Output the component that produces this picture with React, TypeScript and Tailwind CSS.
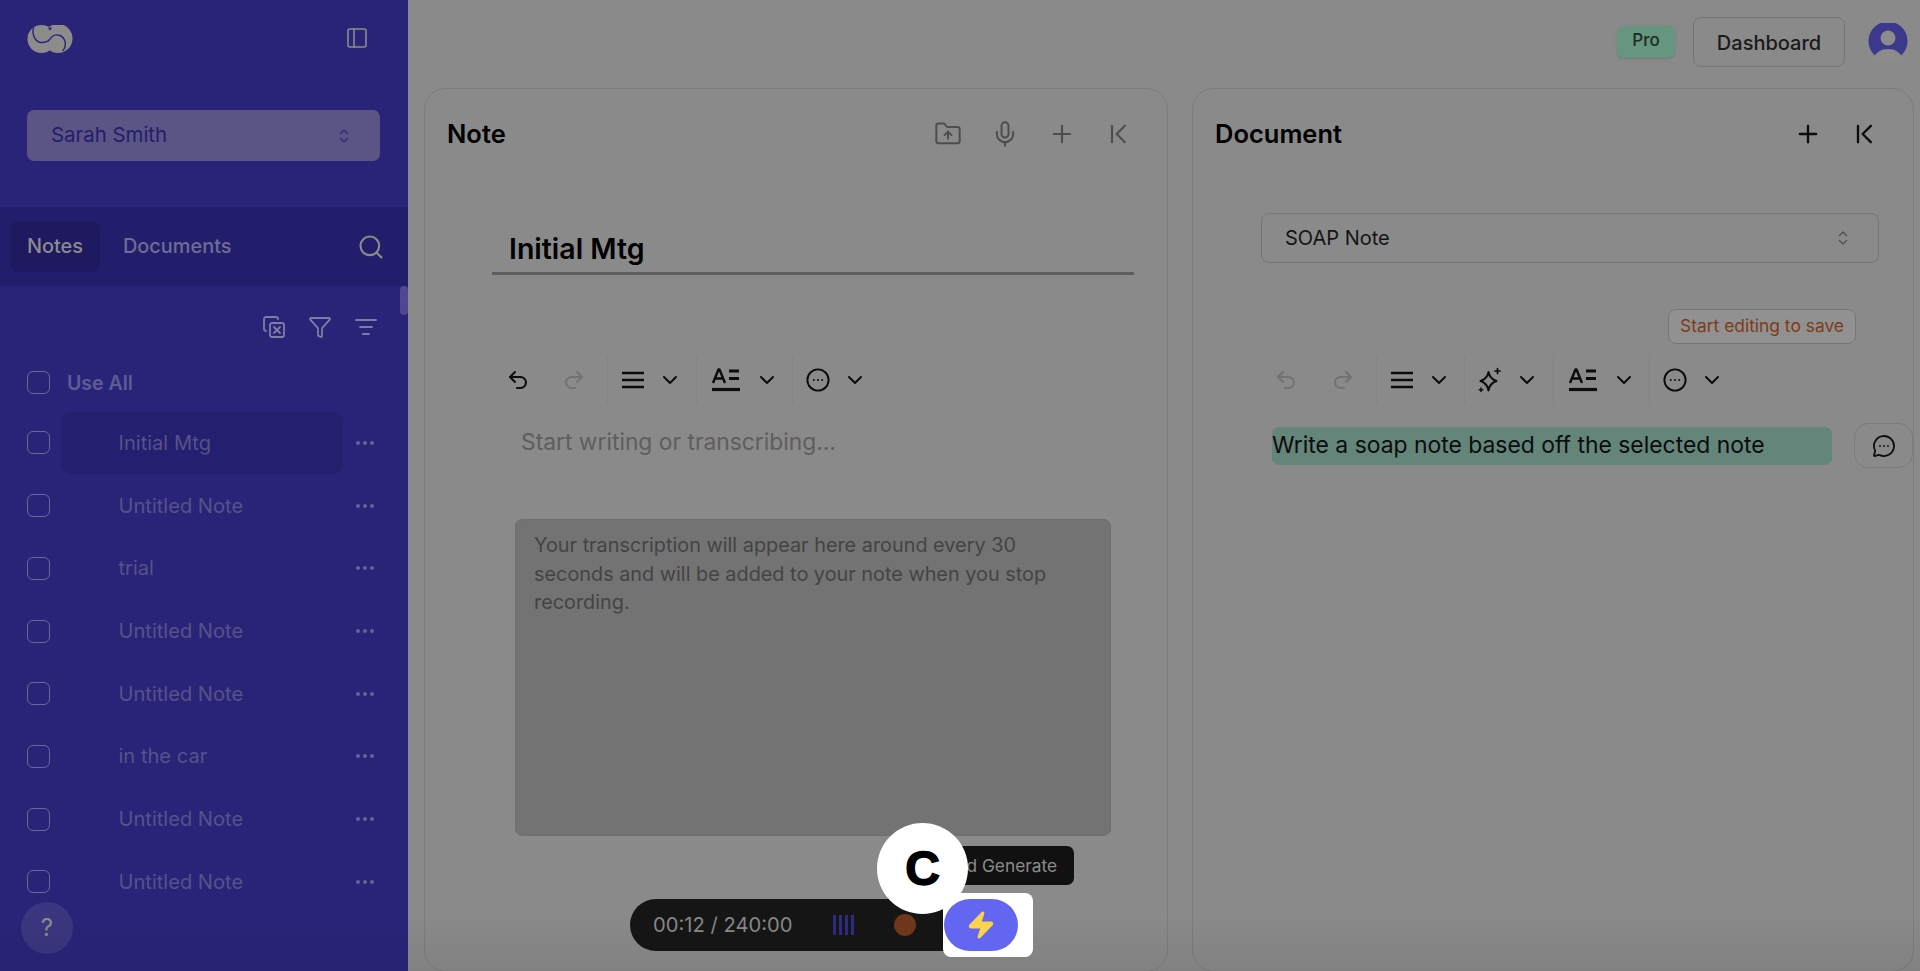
import React from "react";
import {
  PanelLeft, Search, CopyX, Funnel, ListFilter, Ellipsis, FolderUp, Mic, Plus, Undo2, Redo2,
  ChevronDown, MessageCircleMore, Zap,
} from "lucide-react";

function UpDown({ c = "#7b78a8" }: { c?: string }) {
  return (
    <svg width="12" height="16" viewBox="0 0 12 16" fill="none" stroke={c} strokeWidth="1.2" strokeLinecap="round" strokeLinejoin="round">
      <path d="M2.5 5.5 6 2l3.5 3.5M2.5 10.5 6 14l3.5-3.5" />
    </svg>
  );
}

function Collapse({ c, size = 24, w = 2 }: { c: string; size?: number; w?: number }) {
  return (
    <svg width={size} height={size} viewBox="0 0 24 24" fill="none" stroke={c} strokeWidth={w} strokeLinecap="round" strokeLinejoin="round">
      <path d="M6 5v14M17 5l-7 7 7 7" />
    </svg>
  );
}

function TextStyle() {
  return (
    <svg width="30" height="26" viewBox="0 0 30 26" fill="none" stroke="#0c0c0c" strokeLinejoin="round">
      <path d="M2 16 7.5 2.5h1L14 16M4 11.5h8" strokeWidth="2.4" />
      <path d="M18 4h10M18 11.5h10" strokeWidth="2.8" />
      <path d="M1 22.5h28" strokeWidth="3.2" />
    </svg>
  );
}

function MoreCircle() {
  return (
    <svg width="26" height="26" viewBox="0 0 26 26" fill="none" stroke="#0c0c0c">
      <circle cx="13" cy="13" r="10.6" strokeWidth="1.9" />
      <circle cx="8.8" cy="13" r=".6" fill="#0c0c0c" strokeWidth="1" />
      <circle cx="13" cy="13" r=".6" fill="#0c0c0c" strokeWidth="1" />
      <circle cx="17.2" cy="13" r=".6" fill="#0c0c0c" strokeWidth="1" />
    </svg>
  );
}

function Lines() {
  return (
    <svg width="24" height="20" viewBox="0 0 24 20" fill="none" stroke="#0c0c0c" strokeWidth="2.3">
      <path d="M1 3h22M1 10h22M1 17h22" />
    </svg>
  );
}

function Spark() {
  return (
    <svg width="28" height="28" viewBox="0 0 28 28" fill="none" stroke="#0c0c0c" strokeWidth="2" strokeLinejoin="round" strokeLinecap="round">
      <path d="M12.5 6c1 5 3.2 7.5 8 9-4.8 1.5-7 4-8 9.500-1-5.500-3.200-8-8-9.500 4.800-1.500 7-4 8-9z" />
      <path d="M21.500 2.500v5M19 5h5" strokeWidth="1.700" />
      <path d="M5 22v3.500M3.300 23.800h3.400" strokeWidth="1.500" />
    </svg>
  );
}

function Sep() {
  return <div className="h-[48px] w-px shrink-0 bg-[#838383]" />;
}

function Chev() {
  return (
    <div className="flex w-[24px] shrink-0 justify-center">
      <ChevronDown size={24} color="#0c0c0c" strokeWidth={2} />
    </div>
  );
}

const notes = ["Untitled Note", "trial", "Untitled Note", "Untitled Note", "in the car", "Untitled Note", "Untitled Note"];

function NoteRow({ label, active }: { label: string; active?: boolean }) {
  return (
    <div className="flex h-[62.7px] shrink-0 items-center pl-[27px]">
      <div className="h-[23px] w-[23px] shrink-0 rounded-[6px] border border-[#6a669a]" />
      <div className={`ml-[11px] flex h-[62px] w-[282px] items-center rounded-[10px] pl-[57.500px] text-[20.1px] text-[#565289] ${active ? "bg-[#241f6e]" : ""}`}>
        {label}
      </div>
      <Ellipsis size={24} color="#67639a" strokeWidth={2} className="ml-[10px]" />
    </div>
  );
}

export default function App() {
  return (
    <div className="relative flex h-[971px] w-[1920px] overflow-hidden bg-[#8a8a8a] [font-family:Inter,sans-serif]">
      {/* Sidebar */}
      <aside className="relative flex w-[408px] shrink-0 flex-col bg-[#2a2479]">
        <div className="flex h-[110px] shrink-0 items-start justify-between pl-[27px] pr-[39px] pt-[25px]">
          <svg width="46" height="28" viewBox="0 0 46 28">
            <circle cx="14.5" cy="14" r="14" fill="#8c8c8c" />
            <circle cx="31" cy="13.5" r="14.500" fill="#8c8c8c" />
            <path d="M6.500 3C4.500 10 9 18 15 17.500 19 17.500 21.500 16 23 14 25 10.500 29 9 33 10.500 38 12.500 40.500 20 36 25.500" fill="none" stroke="#2a2479" strokeWidth="1.400" strokeLinecap="round" />
            <path d="M21 2.500 23 6 25 2.500z" fill="#2a2479" />
          </svg>
          <PanelLeft size={24} color="#8c8c8c" strokeWidth={1.6} className="mt-[1px]" />
        </div>
        <div className="ml-[27px] flex h-[51px] w-[353px] shrink-0 items-center justify-between rounded-[7px] bg-[#5a5584] pl-[24px] pr-[30px] text-[20.4px] text-[#231e6b]">
          <span>Sarah Smith</span>
          <UpDown c="#2a2479" />
        </div>
        <div className="mt-[46px] flex h-[79px] shrink-0 items-center bg-[#231e6b] pl-[10px] pr-[23px]">
          <div className="flex h-[51px] w-[90px] items-center justify-center rounded-[8px] bg-[#1e1960] text-[19.9px] font-medium text-[#8c8c8c]">Notes</div>
          <div className="ml-[23px] text-[19.9px] font-medium text-[#6f6c97]">Documents</div>
          <Search size={28} color="#8c8c8c" strokeWidth={1.8} className="ml-auto" />
        </div>
        <div className="flex h-[67px] shrink-0 items-center justify-end gap-[22px] pr-[30px] pt-[14px]">
          <CopyX size={24} color="#7f7da3" strokeWidth={1.8} />
          <Funnel size={24} color="#7f7da3" strokeWidth={1.8} />
          <ListFilter size={24} color="#7f7da3" strokeWidth={1.8} />
        </div>
        <div className="flex h-[58.6px] shrink-0 items-center pl-[27px]">
          <div className="h-[23px] w-[23px] rounded-[6px] border border-[#6a669a]" />
          <span className="ml-[17px] pt-[2px] text-[19.5px] font-semibold text-[#5f5b95]">Use All</span>
        </div>
        <NoteRow label="Initial Mtg" active />
        {notes.map((n, i) => (
          <NoteRow key={i} label={n} />
        ))}
        <div className="absolute right-0 top-[286px] h-[29px] w-[8px] rounded-[4px] bg-[#4d4890]" />
        <div className="absolute left-[21px] top-[902px] flex h-[52px] w-[52px] items-center justify-center rounded-full bg-[#3b367f] text-[24px] text-[#8c8c8c]">?</div>
      </aside>

      {/* Main */}
      <main className="flex min-w-0 flex-1 flex-col">
        <header className="flex h-[88px] shrink-0 items-center justify-end pb-[4px] pr-[12px]">
          <div className="flex h-[32px] w-[58px] items-center justify-center rounded-[7px] bg-[#669680] pb-[2px] text-[17px] font-medium text-[#1c2c24] shadow-sm">Pro</div>
          <div className="ml-[18px] flex h-[50px] w-[152px] items-center justify-center rounded-[8px] border border-[#767676] pt-[2px] text-[20px] font-medium text-[#1a1a1a]">Dashboard</div>
          <svg className="ml-[23px]" width="40" height="38" viewBox="0 0 40 38">
            <circle cx="20" cy="18" r="19.5" fill="#3c388c" />
            <circle cx="20" cy="15" r="7.5" fill="#8c8c8c" />
            <path d="M5 36c3-7 8-10 15-10s12 3 15 10v2H5z" fill="#8c8c8c" />
          </svg>
        </header>
        <div className="ml-[16px] flex min-h-0 flex-1 gap-[24px]">
          {/* Note panel */}
          <section className="flex h-[884px] w-[744px] shrink-0 flex-col rounded-[22px] border border-[#7c7c7c]">
            <div className="flex h-[90px] shrink-0 items-center justify-between pl-[22px] pr-[34px]">
              <h2 className="pt-[1px] text-[25.5px] font-semibold text-black">Note</h2>
              <div className="flex items-center gap-[29px] text-[#4d4d4d]">
                <FolderUp size={28} strokeWidth={1.7} />
                <Mic size={28} strokeWidth={1.7} />
                <Plus size={28} strokeWidth={1.8} />
                <Collapse c="#4d4d4d" size={28} w={1.8} />
              </div>
            </div>
            <div className="ml-[67px] mr-[33px] mt-[53px] border-b-[3px] border-[#5e5e5e] pb-[7px] pl-[17px] text-[28.5px] font-semibold leading-[33px] text-black">Initial Mtg</div>
            <div className="ml-[65px] mt-[81px] flex h-[48px] shrink-0 items-center">
              <div className="flex w-[56px] justify-center"><Undo2 size={24} color="#0c0c0c" strokeWidth={2} /></div>
              <div className="flex w-[56px] justify-center"><Redo2 size={24} color="#727272" strokeWidth={2} /></div>
              <div className="ml-[5px]"><Sep /></div>
              <div className="flex w-[50px] justify-center"><Lines /></div>
              <Chev />
              <div className="ml-[14px]"><Sep /></div>
              <div className="flex w-[58px] justify-center"><TextStyle /></div>
              <Chev />
              <div className="ml-[13px]"><Sep /></div>
              <div className="flex w-[50px] justify-center"><MoreCircle /></div>
              <Chev />
            </div>
            <p className="ml-[96px] mt-[24px] text-[22.8px] leading-[28px] text-[#5e5e5e]">Start writing or transcribing...</p>
            <div className="ml-[90px] mt-[63px] h-[317px] w-[596px] rounded-[7px] border border-[#6f6f6f] bg-[#737373] px-[18px] pt-[11px] text-[19.850px] leading-[28.5px] text-[#444444]">
              Your transcription will appear here around every 30 seconds and will be added to your note when you stop recording.
            </div>
          </section>

          {/* Document panel */}
          <section className="flex h-[884px] w-[722px] shrink-0 flex-col rounded-[22px] border border-[#7c7c7c]">
            <div className="flex h-[90px] shrink-0 items-center justify-between pl-[22px] pr-[34px]">
              <h2 className="text-[25.5px] font-semibold text-black">Document</h2>
              <div className="flex items-center gap-[29px]">
                <Plus size={28} color="#0c0c0c" strokeWidth={2} />
                <Collapse c="#0c0c0c" size={28} />
              </div>
            </div>
            <div className="ml-[68px] mt-[34px] flex h-[50px] w-[618px] shrink-0 items-center justify-between rounded-[8px] border border-[#767676] pl-[23px] pr-[29px] text-[20px] text-[#141414]">
              <span>SOAP Note</span>
              <UpDown c="#4d4d4d" />
            </div>
            <div className="ml-[475px] mt-[46px] flex h-[35px] w-[188px] shrink-0 items-center justify-center rounded-[8px] border border-[#767676] bg-[#919191] text-[17.4px] text-[#7e3b1a]">Start editing to save</div>
            <div className="ml-[65px] mt-[12px] flex h-[48px] shrink-0 items-center">
              <div className="flex w-[56px] justify-center"><Undo2 size={24} color="#727272" strokeWidth={2} /></div>
              <div className="flex w-[57px] justify-center"><Redo2 size={24} color="#727272" strokeWidth={2} /></div>
              <div className="ml-[5px]"><Sep /></div>
              <div className="flex w-[50px] justify-center"><Lines /></div>
              <Chev />
              <div className="ml-[13px]"><Sep /></div>
              <div className="flex w-[50px] justify-center"><Spark /></div>
              <Chev />
              <div className="ml-[14px]"><Sep /></div>
              <div className="flex w-[58px] justify-center"><TextStyle /></div>
              <Chev />
              <div className="ml-[13px]"><Sep /></div>
              <div className="flex w-[50px] justify-center"><MoreCircle /></div>
              <Chev />
            </div>
            <div className="ml-[79px] mt-[19px] flex h-[45px] shrink-0 items-center">
              <div className="flex h-[38px] w-[560px] items-center rounded-[7px] bg-[#64857a] text-[22.9px] text-[#0c0c0c]">Write a soap note based off the selected note</div>
              <div className="ml-[22px] flex h-[45px] w-[59px] items-center justify-center rounded-[14px] border border-[#7c7c7c]">
                <MessageCircleMore size={24} color="#0c0c0c" strokeWidth={1.8} />
              </div>
            </div>
          </section>
        </div>
      </main>

      {/* Fade along the bottom edge */}
      <div className="pointer-events-none absolute bottom-0 left-0 right-0 h-[60px] bg-gradient-to-b from-transparent to-[#00000010]" />

      {/* Floating recorder */}
      <div className="absolute left-[630px] top-[899px] flex h-[52px] w-[350px] items-center rounded-l-[26px] bg-[#151515] pl-[23px] text-[20.2px] text-[#868686]">
        <span>00:12 / 240:00</span>
        <div className="ml-[40px] flex h-[20px] gap-[3px]">
          <div className="w-[3px] bg-[#2e2a80]" />
          <div className="w-[3px] bg-[#2e2a80]" />
          <div className="w-[3px] bg-[#2e2a80]" />
          <div className="w-[3px] bg-[#2e2a80]" />
        </div>
        <div className="ml-[40px] h-[22px] w-[22px] rounded-full bg-[#6e361a]" />
      </div>
      <div className="absolute left-[893px] top-[846px] flex h-[39px] w-[181px] items-center justify-end rounded-[7px] bg-[#111111] pr-[17px] text-[17.3px] text-[#8c8c8c]">d Generate</div>
      <div className="absolute left-[943px] top-[893px] flex h-[64px] w-[90px] items-center rounded-[8px] bg-white pl-[1px]">
        <div className="flex h-[52px] w-[74px] items-center justify-center rounded-[26px] bg-[#6366f1]">
          <Zap size={30} color="#fcd34d" fill="#fcd34d" strokeWidth={1.5} />
        </div>
      </div>
      <div className="absolute left-[877px] top-[823px] flex h-[91px] w-[91px] items-center justify-center rounded-full bg-white text-[48px] font-bold leading-none text-black [-webkit-text-stroke:1.5px_black] [font-family:'Liberation_Sans',sans-serif]">C</div>
    </div>
  );
}
